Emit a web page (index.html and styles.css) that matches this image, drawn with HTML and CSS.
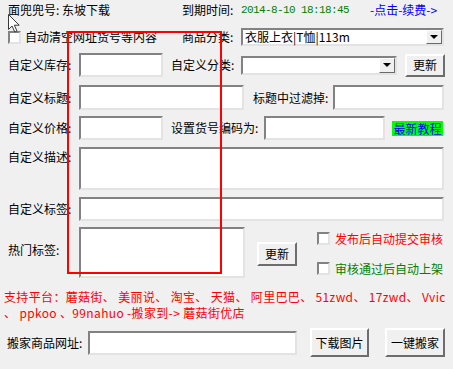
FILE: index.html
```html
<!DOCTYPE html>
<html lang="zh-CN">

<head>
    <meta charset="UTF-8" />
    <meta name="viewport" content="width=device-width, initial-scale=1.0" />
    <title>蘑菇街搬家</title>
    <link rel="stylesheet" href="styles.css">
</head>

<body>
    <div class="win">
        <div class="row r1">
            <span class="owner">面兜兜号: 东坡下载</span>
            <span class="w59">到期时间:</span>
            <span class="expire">2014-8-10 18:18:45</span>
            <a class="renew" href="#">-点击-续费-&gt;</a>
        </div>

        <div class="row r2">
            <span class="check"></span>
            <span class="clear-text">自动清空网址货号等内容</span>
            <span class="w59">商品分类:</span>
            <div class="select w203"><span class="value">衣服上衣|T恤|113m</span><span class="arrow"></span></div>
        </div>

        <div class="row r3">
            <span class="name">自定义库存:</span>
            <input class="box w84" type="text" />
            <span class="ml8 w70">自定义分类:</span>
            <div class="select w156"><span class="value"></span><span class="arrow"></span></div>
            <button class="btn small ml8">更新</button>
        </div>

        <div class="row r4">
            <span class="name">自定义标题:</span>
            <input class="box w165" type="text" />
            <span class="ml9 w80">标题中过滤掉:</span>
            <input class="box w111" type="text" />
        </div>

        <div class="row r5">
            <span class="name">自定义价格:</span>
            <input class="box w84" type="text" />
            <span class="ml8 w93">设置货号编码为:</span>
            <input class="box w121" type="text" />
            <a class="tutorial" href="#">最新教程</a>
        </div>

        <div class="row r6">
            <span class="name top2">自定义描述:</span>
            <textarea class="box w365"></textarea>
        </div>

        <div class="row r7">
            <span class="name">自定义标签:</span>
            <input class="box w365" type="text" />
        </div>

        <div class="row r8">
            <span class="name top15">热门标签:</span>
            <textarea class="box w166"></textarea>
            <button class="btn small hot-btn">更新</button>
            <div class="options">
                <div class="option red"><span class="check"></span>发布后自动提交审核</div>
                <div class="option green"><span class="check"></span>审核通过后自动上架</div>
            </div>
        </div>

        <p class="platforms">支持平台：蘑菇街、 美丽说、 淘宝、 天猫、 阿里巴巴、 51zwd、 17zwd、 Vvic<br>、 ppkoo 、99nahuo -搬家到-&gt; 蘑菇街优店</p>

        <div class="row r10">
            <span class="url-label">搬家商品网址:</span>
            <input class="box w209" type="text" />
            <button class="btn big ml13">下载图片</button>
            <button class="btn big ml16">一键搬家</button>
        </div>

        <div class="marquee"></div>
        <svg class="pointer" width="13" height="19" viewBox="0 0 13 19">
            <path d="M0.5 0.5 L0.5 15.5 L4 12 L6.8 18 L9 17 L6.3 11.2 L11.2 11.2 Z" fill="#fff" stroke="#3a3a3a" stroke-width="1" />
        </svg>
    </div>
</body>

</html>
```

FILE: styles.css
```css
body {
    margin: 0;
    background-color: #f0f0f0;
}

.win {
    position: relative;
    width: 453px;
    height: 369px;
    overflow: hidden;
    background-color: #f0f0f0;
    font-family: "Noto Sans CJK SC", "Liberation Sans", sans-serif;
    font-size: 12px;
    line-height: 16px;
    color: #000;
}

.row {
    display: flex;
    align-items: center;
}

.r1 {
    height: 20px;
    padding-left: 8px;
}

.r2 {
    margin-top: 8px;
    height: 18px;
    padding-left: 8px;
}

.r3 {
    margin-top: 7px;
    height: 24px;
}

.r4 {
    margin-top: 8px;
    height: 25px;
}

.r5 {
    margin-top: 6px;
    height: 24px;
}

.r6 {
    margin-top: 7px;
    height: 43px;
    align-items: flex-start;
}

.r7 {
    margin-top: 7px;
    height: 24px;
}

.r8 {
    margin-top: 6px;
    height: 51px;
    align-items: flex-start;
}

.r10 {
    margin-top: 7px;
    height: 29px;
}

.owner {
    width: 174px;
}

.expire {
    width: 129px;
    color: #008000;
    font-family: "Liberation Mono", monospace;
    font-size: 11px;
    letter-spacing: -0.6px;
}

.renew {
    color: #0000ff;
    text-decoration: none;
}

.clear-text {
    width: 157px;
    margin-left: 4px;
}

.name {
    width: 79px;
    padding-left: 8px;
    box-sizing: border-box;
    flex-shrink: 0;
}

.top2 {
    padding-top: 2px;
}

.top15 {
    padding-top: 15px;
}

.w59 { width: 59px; }
.w70 { width: 70px; }
.w80 { width: 80px; }
.w93 { width: 93px; }

.ml8 { margin-left: 8px; }
.ml9 { margin-left: 9px; }
.ml13 { margin-left: 13px; }
.ml16 { margin-left: 16px; }

.box {
    box-sizing: border-box;
    height: 100%;
    margin: 0;
    padding: 0 2px;
    background-color: #fff;
    border-style: solid;
    border-width: 2px;
    border-color: #828282 #e3e3e3 #e3e3e3 #828282;
    font: inherit;
    resize: none;
    outline: none;
}

.w84 { width: 84px; }
.w111 { width: 111px; }
.w121 { width: 121px; }
.w165 { width: 165px; }
.w166 { width: 166px; }
.w209 { width: 209px; }
.w365 { width: 365px; }

.select {
    box-sizing: border-box;
    height: 100%;
    display: flex;
    background-color: #fff;
    border-style: solid;
    border-width: 2px;
    border-color: #828282 #e3e3e3 #e3e3e3 #828282;
}

.r3 .select {
    height: 19px;
}

.w203 { width: 203px; }
.w156 { width: 156px; }

.select .value {
    flex: 1;
    padding-left: 2px;
    line-height: 14px;
    white-space: nowrap;
}

.select .arrow {
    position: relative;
    width: 16px;
    box-sizing: border-box;
    background-color: #f0f0f0;
    border-style: solid;
    border-width: 1px;
    border-color: #fff #696969 #696969 #fff;
}

.select .arrow::after {
    content: "";
    position: absolute;
    left: 3px;
    top: 4px;
    border-left: 4px solid transparent;
    border-right: 4px solid transparent;
    border-top: 4px solid #000;
}

.btn {
    box-sizing: border-box;
    margin-top: 0;
    margin-bottom: 0;
    padding: 0;
    background-color: #f0f0f0;
    border-style: solid;
    border-width: 2px;
    border-color: #fff #6d6d6d #6d6d6d #fff;
    font: inherit;
    color: #000;
}

.small {
    width: 40px;
    height: 23px;
}

.big {
    width: 59px;
    height: 29px;
}

.big + .big {
    width: 60px;
}

.hot-btn {
    height: 24px;
    margin-left: 12px;
    margin-top: 15px;
}

.tutorial {
    margin-left: 7px;
    width: 51px;
    height: 15px;
    line-height: 15px;
    background-color: #00ff00;
    color: #0000ff;
    text-align: center;
    text-decoration: none;
}

.check {
    display: inline-block;
    flex-shrink: 0;
    width: 13px;
    height: 13px;
    box-sizing: border-box;
    background-color: #fff;
    border-style: solid;
    border-width: 2px;
    border-color: #828282 #e3e3e3 #e3e3e3 #828282;
}

.options {
    margin-left: 20px;
    padding-top: 5px;
}

.option {
    display: flex;
    align-items: center;
    gap: 5px;
    height: 13px;
}

.option + .option {
    margin-top: 17px;
}

.red {
    color: #ff0000;
}

.green {
    color: #008000;
}

.platforms {
    margin: 11px 0 0;
    padding-left: 4px;
    width: 453px;
    box-sizing: border-box;
    color: #ff0000;
    line-height: 16px;
    letter-spacing: 0.35px;
    white-space: nowrap;
}

.url-label {
    width: 88px;
    padding-left: 7px;
    box-sizing: border-box;
}

.r10 .box {
    height: 24px;
}

.marquee {
    position: absolute;
    left: 67px;
    top: 31px;
    width: 155px;
    height: 243px;
    box-sizing: border-box;
    border: 2px solid #ff0000;
}

.pointer {
    position: absolute;
    left: 8px;
    top: 14px;
}
```
